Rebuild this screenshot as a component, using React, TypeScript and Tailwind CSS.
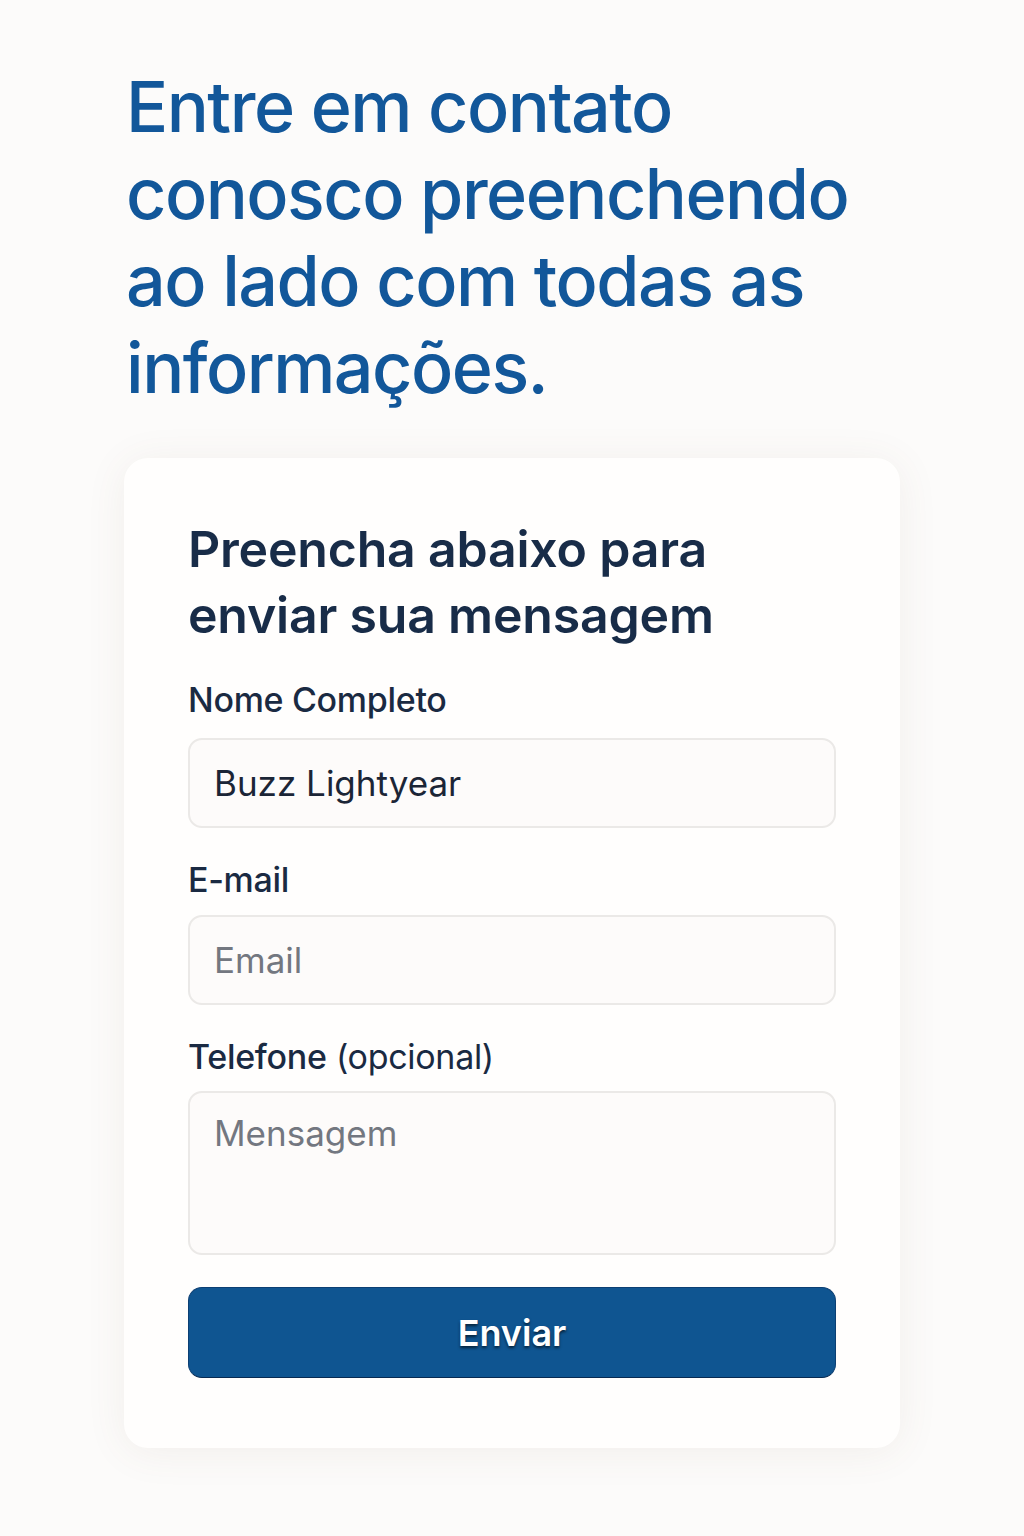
import React from "react";

export default function App() {
  return (
    <div className="min-h-[1536px] w-full bg-[#fcfbfa] font-['Inter','Noto_Sans',sans-serif]">
      <div className="pl-[126px] pt-[63px]">
        <h1 className="text-[70px] leading-[87px] font-medium tracking-[-1.5px] text-[#12579a]">
          Entre em contato
          <br />
          conosco preenchendo
          <br />
          ao lado com todas as
          <br />
          informações.
        </h1>
      </div>
      <div className="ml-[124px] mt-[47px] w-[776px] rounded-[24px] bg-[#fffefd] px-16 pt-[58px] pb-[70px] shadow-[0_4px_40px_rgba(120,90,60,0.08)]">
        <h2 className="mb-8 text-[50px] leading-[66px] font-semibold tracking-[-0.2px] text-[#182c48]">
          Preencha abaixo para
          <br />
          enviar sua mensagem
        </h2>
        <div className="flex flex-col gap-8">
          <div className="flex flex-col">
            <label className="mb-[18px] text-[34px] leading-[40px] font-medium tracking-[-0.3px] text-[#1a2a42]">
              Nome Completo
            </label>
            <input
              className="h-[90px] w-full rounded-[14px] border-2 border-[#ebe9e7] bg-[#fdfbfa] px-6 text-[35px] text-[#1b2536] outline-none"
              defaultValue="Buzz Lightyear"
            />
          </div>
          <div className="flex flex-col">
            <label className="mb-[15px] text-[34px] leading-[40px] font-medium tracking-[-0.3px] text-[#1a2a42]">
              E-mail
            </label>
            <input
              className="h-[90px] w-full rounded-[14px] border-2 border-[#ebe9e7] bg-[#fdfbfa] px-6 text-[35px] text-[#1b2536] placeholder:text-[#737780] outline-none"
              placeholder="Email"
            />
          </div>
          <div className="flex flex-col">
            <label className="mb-[14px] text-[34px] leading-[40px] tracking-[-0.3px] text-[#1a2a42]">
              <span className="font-medium">Telefone</span>{" "}
              <span className="font-normal">(opcional)</span>
            </label>
            <textarea
              className="h-[164px] w-full resize-none rounded-[14px] border-2 border-[#ebe9e7] bg-[#fdfbfa] px-6 pt-[18px] text-[35px] leading-[44px] text-[#1b2536] placeholder:text-[#737780] outline-none"
              placeholder="Mensagem"
            />
          </div>
          <button className="h-[91px] w-full rounded-[14px] border border-[#0c3f73] border-b-[#082a52] bg-[#0f5591] text-[36px] font-semibold text-white [text-shadow:0_2px_3px_rgba(0,0,0,0.6)]">
            Enviar
          </button>
        </div>
      </div>
    </div>
  );
}
